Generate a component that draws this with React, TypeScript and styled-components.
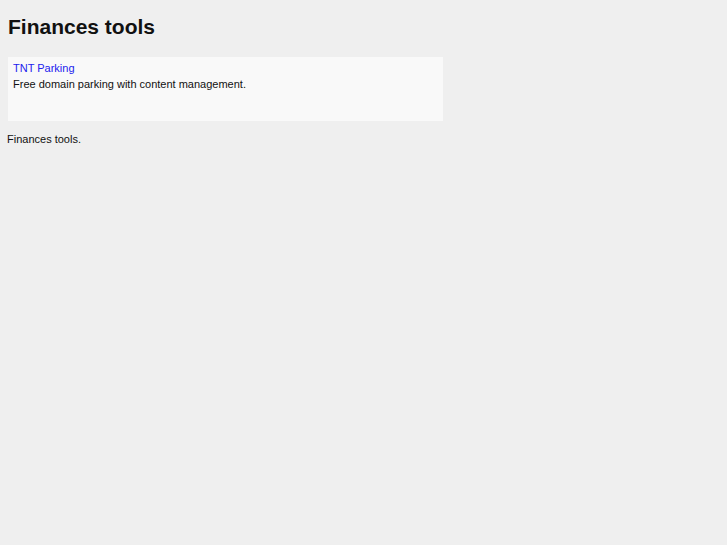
import styled, { createGlobalStyle } from "styled-components";

const GlobalStyle = createGlobalStyle`
  body {
    margin: 0;
    background: #efefef;
    font-family: "Liberation Sans", Arial, sans-serif;
    color: #111;
  }
`;

const Page = styled.div`
  padding: 8px 7px;
`;

const Title = styled.h1`
  font-size: 21px;
  font-weight: 700;
  margin: 6px 0 0 1px;
  line-height: 25px;
  color: #111;
`;

const Card = styled.div`
  margin: 18px 0 0 1px;
  width: 425px;
  height: 55px;
  padding: 4px 5px 5px;
  background: #f9f9f9;
`;

const CardLink = styled.a`
  display: block;
  font-size: 11px;
  line-height: 14px;
  color: #2222ee;
  text-decoration: none;
`;

const CardText = styled.p`
  margin: 2px 0 0;
  font-size: 11px;
  line-height: 14px;
`;

const Footer = styled.p`
  margin: 11px 0 0;
  font-size: 11px;
  line-height: 14px;
`;

export default function App() {
  return (
    <Page>
      <GlobalStyle />
      <Title>Finances tools</Title>
      <Card>
        <CardLink href="#">TNT Parking</CardLink>
        <CardText>Free domain parking with content management.</CardText>
      </Card>
      <Footer>Finances tools.</Footer>
    </Page>
  );
}
